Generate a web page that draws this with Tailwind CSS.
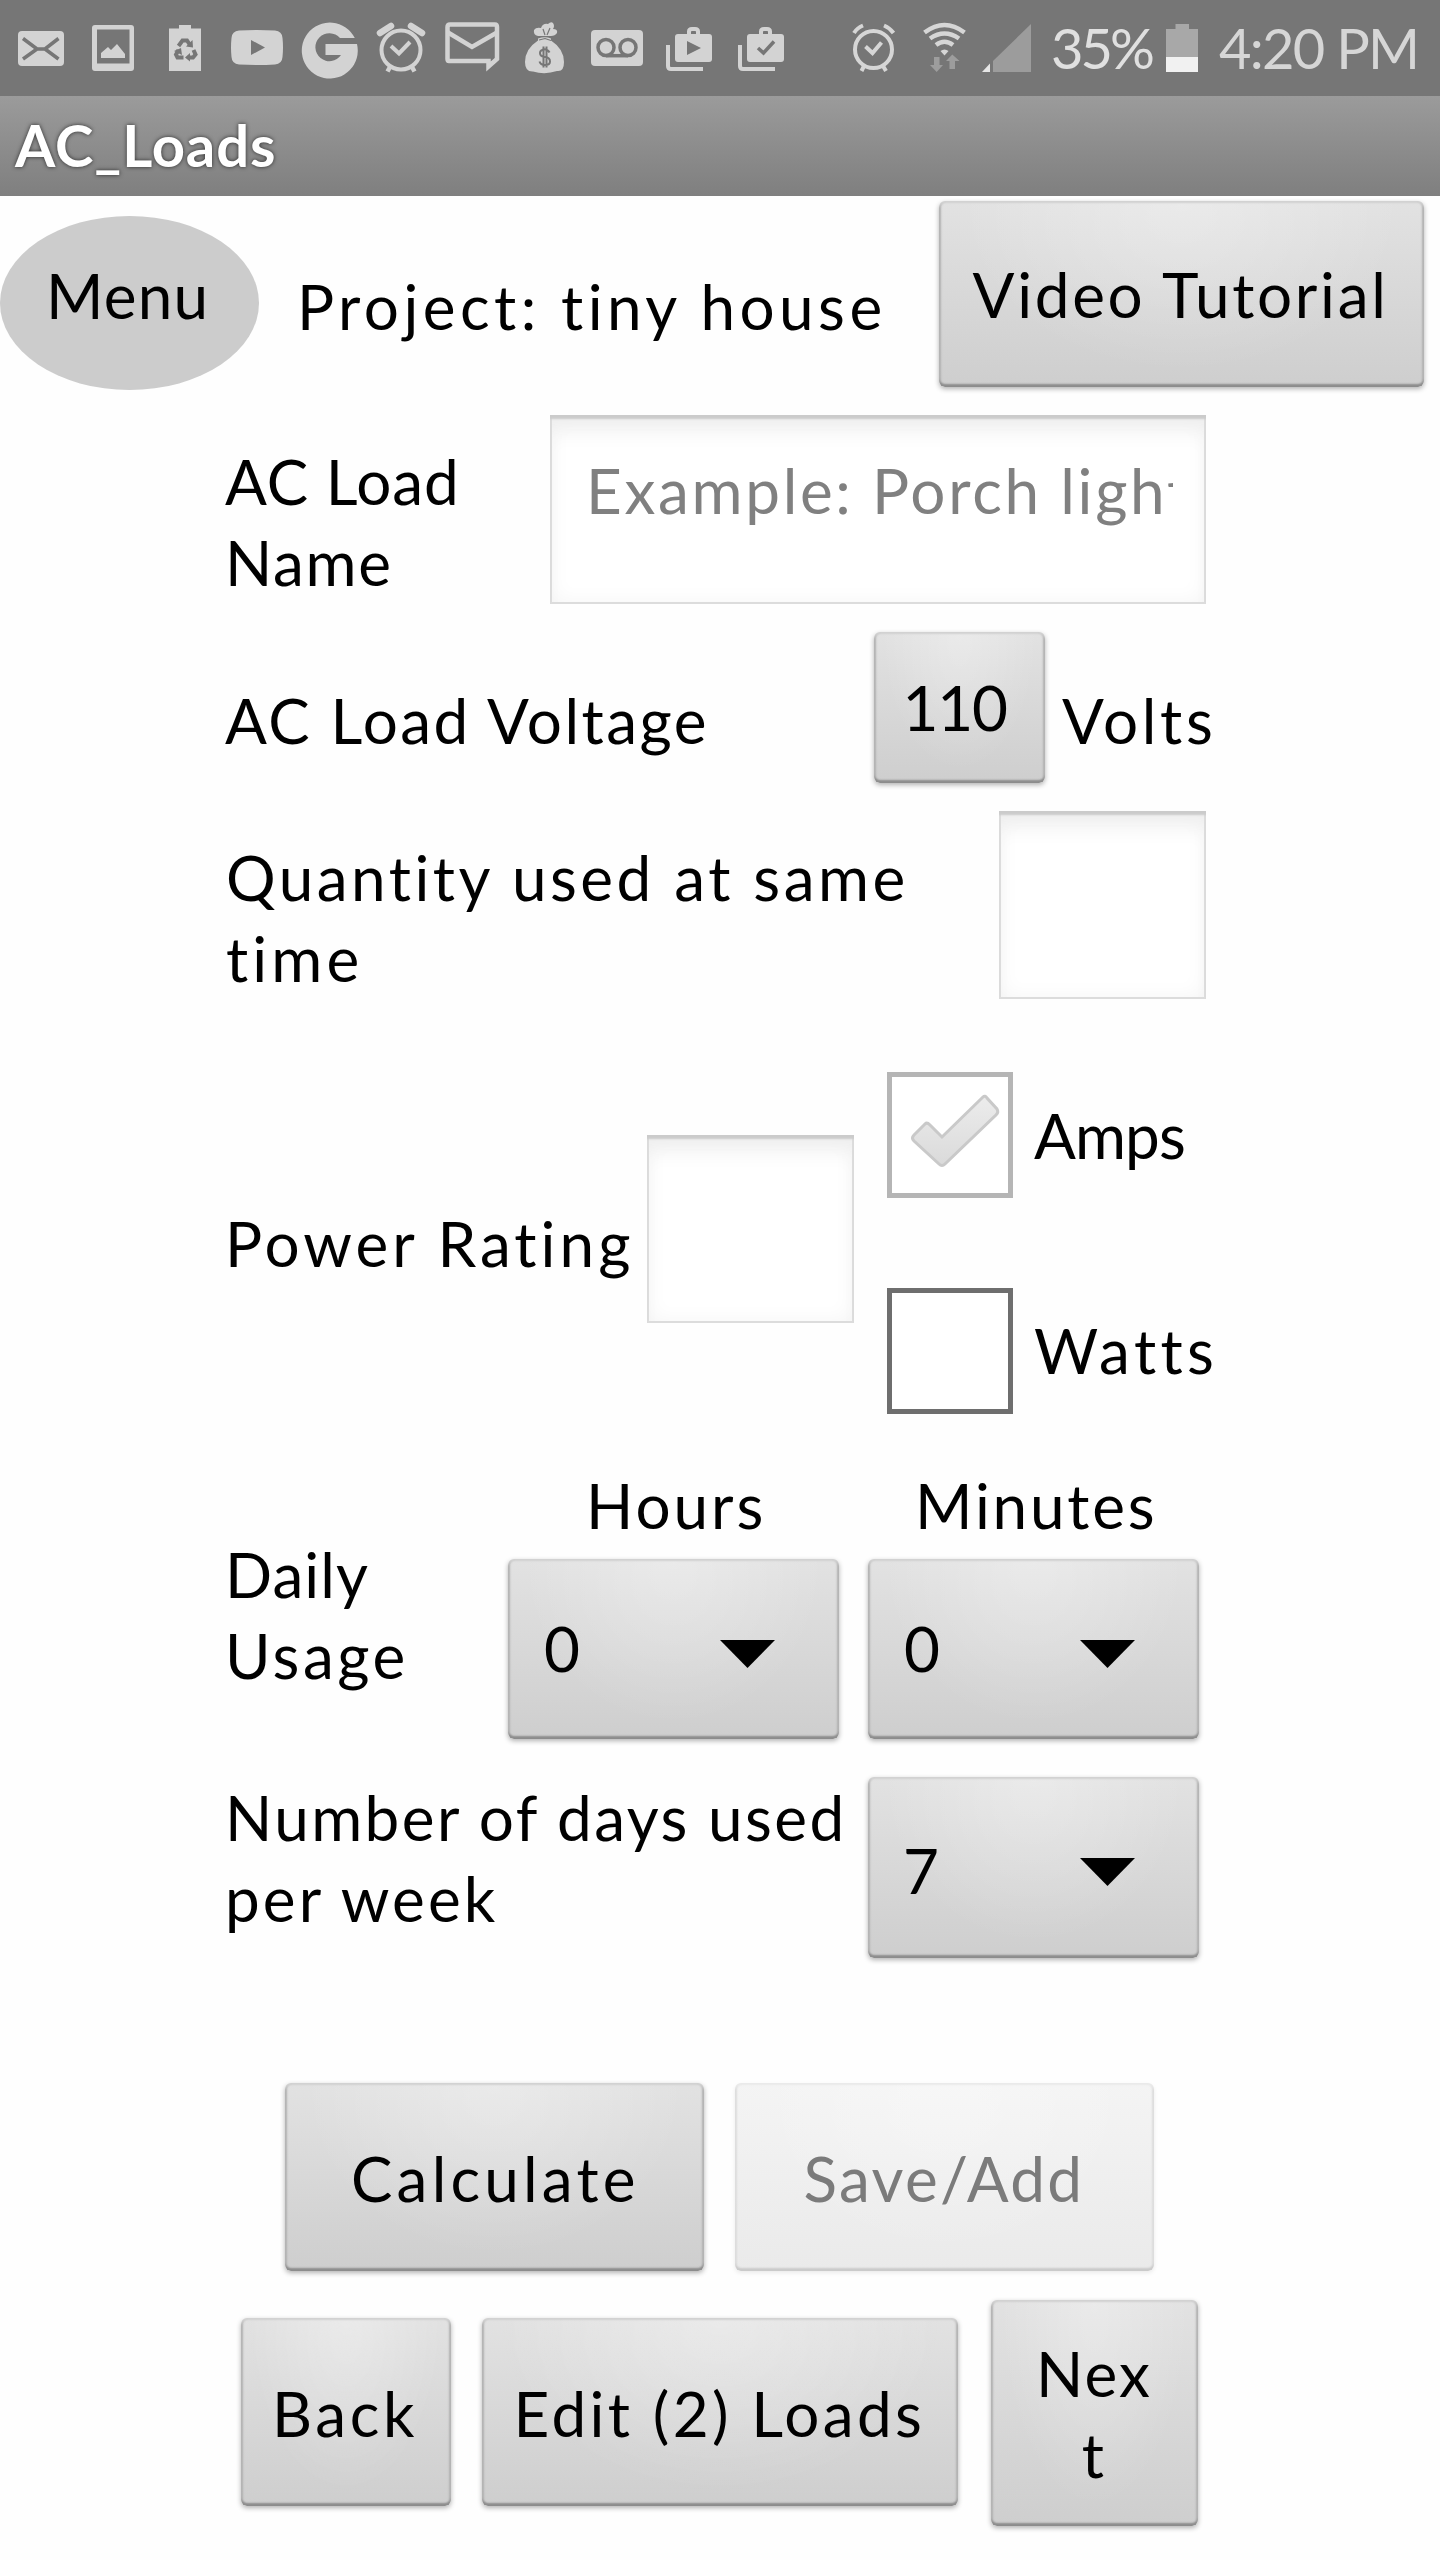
<!DOCTYPE html>
<html lang="en">
<head>
<meta charset="utf-8">
<title>AC_Loads</title>
<script src="https://cdn.jsdelivr.net/npm/@tailwindcss/browser@4"></script>
</head>
<body class="bg-white">
<div class="flex h-[2560px] w-[1440px] flex-col overflow-hidden bg-[#fefefe] font-[Lato,sans-serif] text-[62px] leading-[81px] whitespace-nowrap text-black">

  <!-- Status bar -->
  <header class="flex h-24 shrink-0 bg-[#767676] text-[56px] leading-[96px] text-[#d6d6d6]">
    <svg class="shrink-0" width="78" height="96" viewBox="0 0 78 96"><rect x="18" y="31" width="46" height="35" rx="4" fill="#d3d3d3"/><path d="M23 38.500L37 49H45L58.500 38.500M23 59L37 49M45 49L58.500 59" fill="none" stroke="#767676" stroke-width="3.500"/></svg>
    <svg class="shrink-0" width="74" height="96" viewBox="78 0 74 96"><path fill-rule="evenodd" fill="#d3d3d3" d="M95 25H131Q134 25 134 28V68Q134 71 131 71H95Q92 71 92 68V28Q92 25 95 25ZM97 29.500V63.500H129.500V29.500Z"/><path d="M101 58V53L108 47L111 50L117 44L125 54V58Z" fill="#d3d3d3"/></svg>
    <svg class="shrink-0" width="64" height="96" viewBox="152 0 64 96"><path d="M169 28.500H179V25H191V28.500H201V71H169Z" fill="#d3d3d3"/><g fill="none" stroke="#767676" stroke-width="4"><path d="M178.500 46L182.500 40.500H187L190 45"/><path d="M193.500 50L195.500 54.500L193 57.500H188"/><path d="M183.500 57.500H177.500L176 54.500L178.500 50"/></g><path d="M186 46.500L193 47.500L192.500 40ZM190 53V61.500L185 57.500ZM174 51L181 48L182 55Z" fill="#767676"/></svg>
    <svg class="shrink-0" width="76" height="96" viewBox="216 0 76 96"><path d="M239 30.500Q257 29.500 275 30.500Q282 31 282.500 38Q283.500 47.500 282.500 57Q282 64 275 64.500Q257 65.500 239 64.500Q232 64 231.500 57Q230.500 47.500 231.500 38Q232 31 239 30.500Z" fill="#d3d3d3"/><path d="M251 40V55L265 47.500Z" fill="#767676"/></svg>
    <svg class="shrink-0" width="76" height="96" viewBox="292 0 76 96"><path d="M354.800 38A28 28 0 1 0 357 44H325.500V55H341A14 14 0 1 1 340 38Z" fill="#d3d3d3"/></svg>
    <svg class="shrink-0" width="67" height="96" viewBox="368 0 67 96" fill="none" stroke="#d3d3d3"><circle cx="401" cy="50" r="19.500" stroke-width="4"/><path d="M391 46L399 53.500L410 42" stroke-width="4"/><path d="M380 33L391 26M411 26L422 33" stroke-width="6.500" stroke-linecap="round"/><path d="M390 67L387.500 71.500M412 67L414.500 71.500" stroke-width="4.500"/></svg>
    <svg class="shrink-0" width="77" height="96" viewBox="435 0 77 96" fill="none" stroke="#d3d3d3" stroke-width="4.500"><path d="M488.500 61H449Q447.500 61 447.500 59V27Q447.500 24.500 450 24.500H495Q497 24.500 497 27V59L488.500 66.500Z"/><path d="M448 32.500L472 47L497 32.500"/></svg>
    <svg class="shrink-0" width="66" height="96" viewBox="512 0 66 96"><path d="M538 36Q533 35 534 30Q536 27 541 28Q543 23 548 24Q551 21 553 23Q555 26 553 29Q558 29 557 33Q555 36 551 36Z" fill="#d3d3d3"/><path d="M538 38.500Q545 36 551 38.500V40.500Q564 49 564 62Q564 72 557 71Q545 75 533 71.500Q525 72 525 62Q525 49 538 40.500Z" fill="#d3d3d3"/><path d="M543 29L545 35M550 28L547 35M539 40L545 38.500L551 40.500" fill="none" stroke="#767676" stroke-width="1.200"/><path d="M549.500 52.500Q548 49.500 545 49.500Q540 49.500 540 53Q540 56.500 545 57Q550 57.500 550 61.500Q550 65 545 65Q540.500 65 539.500 61.500M543.500 46.500V67.500M546.500 46.500V67.500" fill="none" stroke="#767676" stroke-width="2"/></svg>
    <svg class="shrink-0" width="77" height="96" viewBox="578 0 77 96"><rect x="591" y="30" width="52" height="36" rx="4" fill="#d3d3d3"/><g fill="none" stroke="#767676" stroke-width="3.500"><circle cx="606" cy="47.500" r="8"/><circle cx="628" cy="47.500" r="8"/><path d="M606 55.700H628"/></g></svg>
    <svg class="shrink-0" width="73" height="96" viewBox="655 0 73 96"><rect x="675" y="34" width="37" height="28" rx="3" fill="#d3d3d3"/><path d="M689 34V31.500Q689 29 692 29H695Q698 29 698 31.500V34M668 45V66Q668 69 671 69H703" fill="none" stroke="#d3d3d3" stroke-width="4"/><path d="M687 41V55L701 48Z" fill="#767676"/></svg>
    <svg class="shrink-0" width="72" height="96" viewBox="728 0 72 96"><rect x="747" y="34" width="37" height="28" rx="3" fill="#d3d3d3"/><path d="M761 34V31.500Q761 29 764 29H767Q770 29 770 31.500V34M740 45V66Q740 69 743 69H775" fill="none" stroke="#d3d3d3" stroke-width="4"/><path d="M758 48L763.500 53L774 41.500" fill="none" stroke="#767676" stroke-width="3.500"/></svg>
    <svg class="ml-10 shrink-0" width="75" height="96" viewBox="840 0 75 96" fill="none" stroke="#d6d6d6"><circle cx="873.500" cy="49.500" r="18.500" stroke-width="4"/><path d="M865.500 46.500L872.500 53L881.500 42.500" stroke-width="4"/><path d="M854 33Q857 28 863 25.500M884 25.500Q890 28 893.500 33" stroke-width="4"/><path d="M864 66L861.500 71M883 66L886 71" stroke-width="4"/></svg>
    <svg class="shrink-0" width="60" height="96" viewBox="915 0 60 96"><g fill="none" stroke="#d6d6d6" stroke-width="4.500"><path d="M924.500 32.500Q944.500 17.500 964.500 32.500"/><path d="M930 38.500Q944.500 28.500 959 38.500"/><path d="M936 45Q944.500 38.500 953 45"/></g><path d="M940.500 51Q944.500 48 948.500 51L944.500 55.500Z" fill="#d6d6d6"/><path d="M934 57H939.500V65H943L936.700 72L930 65H934ZM949.500 69H955V61H959.500L952.300 54.500L946 61H949.500Z" fill="#9d9d9d"/></svg>
    <svg class="shrink-0" width="70" height="96" viewBox="975 0 70 96"><path d="M993 61L1031 24V72H993Z" fill="#9c9c9c"/><path d="M982 72L990 63.500V72Z" fill="#e6e6e6"/></svg>
    <div class="w-[115px] shrink-0 pl-[6px] tracking-[-2.98px] text-[#e0e0e0]">35%</div>
    <svg class="shrink-0" width="45" height="96" viewBox="1160 0 45 96"><path d="M1166 29H1175.500V24H1189V29H1198V57H1166Z" fill="#a8a8a8"/><path d="M1166 57H1198V72H1166Z" fill="#f1f1f1"/></svg>
    <div class="pl-[14px] tracking-[-1.73px]">4:20 PM</div>
  </header>

  <!-- Title bar -->
  <div class="h-[100px] shrink-0 bg-linear-to-b from-[#9b9b9b] to-[#7f7f7f] pl-[15px] text-[58px] leading-[98px] font-bold tracking-[0.89px] text-white [text-shadow:0_0_4px_rgba(0,0,0,0.7)]">AC_Loads</div>

  <main class="flex flex-col">
    <!-- Project header -->
    <div class="flex h-[209px] items-start">
      <div class="mt-5 h-[174px] w-[259px] shrink-0 rounded-[50%] bg-[#ccc] pt-[39px] pl-[46px] tracking-[1.2px]">Menu</div>
      <div class="mt-[69.5px] ml-[38px] w-[590px] shrink-0 tracking-[4.45px]">Project: tiny house</div>
      <button class="mt-[5px] ml-[52px] h-[186px] w-[485px] shrink-0 rounded-md bg-[radial-gradient(ellipse_at_50%_0%,rgba(255,255,255,0.3),transparent_65%),linear-gradient(#e2e2e2,#cecece)] pb-[0px] pl-[33.5px] text-left tracking-[2.69px] shadow-[inset_0_2px_2px_#d2d2d2,inset_0_-3px_2px_#8c8c8c,inset_2px_0_2px_#b4b4b4,inset_-2px_0_2px_#b4b4b4,0_2px_5px_rgba(0,0,0,0.3)]">Video Tutorial</button>
    </div>

    <!-- Load name -->
    <div class="flex h-[217px] items-start">
      <div class="mt-[35.5px] w-[549.5px] shrink-0 pl-[225px]"><div class="tracking-[0.89px]">AC Load</div><div class="tracking-[1.7px]">Name</div></div>
      <div class="mt-[9.5px] h-[189px] w-[656px] shrink-0 bg-white pt-[35px] pl-[36.5px] shadow-[inset_0_5px_2px_-1px_#cbcbcb,inset_0_0_0_2px_#dcdcdc,inset_0_24px_22px_-10px_#ededed,inset_0_0_22px_#f3f3f3]"><div class="w-[587px] overflow-hidden tracking-[2.68px] text-[#808080]">Example: Porch light</div></div>
    </div>

    <!-- Voltage -->
    <div class="flex h-[183px] items-start">
      <div class="mt-[57.5px] w-[874px] shrink-0 pl-[225px] tracking-[2.49px]">AC Load Voltage</div>
      <button class="mt-[10px] h-[151px] w-[171px] shrink-0 rounded-md bg-[radial-gradient(ellipse_at_50%_0%,rgba(255,255,255,0.3),transparent_65%),linear-gradient(#e2e2e2,#cecece)] pb-[1px] pl-[28.5px] text-left tracking-[-1.21px] shadow-[inset_0_2px_2px_#d2d2d2,inset_0_-3px_2px_#8c8c8c,inset_2px_0_2px_#b4b4b4,inset_-2px_0_2px_#b4b4b4,0_2px_5px_rgba(0,0,0,0.3)]">110</button>
      <div class="mt-[57.5px] ml-[17px] tracking-[3.67px]">Volts</div>
    </div>

    <!-- Quantity -->
    <div class="flex h-[255px] items-start">
      <div class="mt-[31.5px] w-[999px] shrink-0 pl-[226px]"><div class="tracking-[3.51px]">Quantity used at same</div><div class="tracking-[4.1px]">time</div></div>
      <div class="mt-[6px] h-[188px] w-[207px] shrink-0 bg-white shadow-[inset_0_5px_2px_-1px_#cbcbcb,inset_0_0_0_2px_#dcdcdc,inset_0_24px_22px_-10px_#ededed,inset_0_0_22px_#f3f3f3]"></div>
    </div>

    <!-- Power rating -->
    <div class="flex h-[400px] items-start">
      <div class="mt-[142.5px] w-[647px] shrink-0 pl-[225px] tracking-[4.02px]">Power Rating</div>
      <div class="mt-[75px] h-[188px] w-[207px] shrink-0 bg-white shadow-[inset_0_5px_2px_-1px_#cbcbcb,inset_0_0_0_2px_#dcdcdc,inset_0_24px_22px_-10px_#ededed,inset_0_0_22px_#f3f3f3]"></div>
      <div class="mt-[12px] ml-[33px] flex flex-col gap-[90px]">
        <div class="flex h-[126px] gap-[21px]">
          <div class="w-[126px] shrink-0 border-[5px] border-[#b5b5b5] bg-white"><svg width="114" height="114" viewBox="4 4 114 114"><defs><linearGradient id="tick" x1="0" y1="0" x2="0" y2="1"><stop offset="0" stop-color="#ececec"/><stop offset="1" stop-color="#dadada"/></linearGradient></defs><path d="M95 24Q97 22 99 25L109 36Q111 39 108 42L57 91Q54 94 51 91L26 68Q23 65 26 62L37 51Q39 49 42 52L54 64Z" fill="url(#tick)" stroke="#c9c9c9" stroke-width="3"/></svg></div>
          <div class="pt-[22.5px] tracking-[-0.87px]">Amps</div>
        </div>
        <div class="flex h-[126px] gap-[21px]">
          <div class="w-[126px] shrink-0 border-[5px] border-[#6e6e6e] bg-white"></div>
          <div class="pt-[22px] tracking-[4.39px]">Watts</div>
        </div>
      </div>
    </div>

    <!-- Daily usage -->
    <div class="flex h-[305px] items-start">
      <div class="mt-[74px] w-[508px] shrink-0 pl-[225px]"><div class="tracking-[1.08px]">Daily</div><div class="tracking-[3.5px]">Usage</div></div>
      <div class="mt-[4.5px] w-[331px] shrink-0">
        <div class="pl-[78px] tracking-[3px]">Hours</div>
        <div class="mt-[13px] flex h-[180px] items-start rounded-md bg-[radial-gradient(ellipse_at_50%_0%,rgba(255,255,255,0.3),transparent_65%),linear-gradient(#e2e2e2,#cecece)] shadow-[inset_0_2px_2px_#d2d2d2,inset_0_-3px_2px_#8c8c8c,inset_2px_0_2px_#b4b4b4,inset_-2px_0_2px_#b4b4b4,0_2px_5px_rgba(0,0,0,0.3)]"><div class="w-[212px] pt-[49px] pl-[36px]">0</div><svg class="mt-[81px]" width="55" height="28" viewBox="0 0 55 28"><path d="M0 0H55L27.500 28Z"/></svg></div>
      </div>
      <div class="mt-[4.5px] ml-[29px] w-[331px] shrink-0">
        <div class="pl-[47px] tracking-[2.8px]">Minutes</div>
        <div class="mt-[13px] flex h-[180px] items-start rounded-md bg-[radial-gradient(ellipse_at_50%_0%,rgba(255,255,255,0.3),transparent_65%),linear-gradient(#e2e2e2,#cecece)] shadow-[inset_0_2px_2px_#d2d2d2,inset_0_-3px_2px_#8c8c8c,inset_2px_0_2px_#b4b4b4,inset_-2px_0_2px_#b4b4b4,0_2px_5px_rgba(0,0,0,0.3)]"><div class="w-[212px] pt-[49px] pl-[36px]">0</div><svg class="mt-[81px]" width="55" height="28" viewBox="0 0 55 28"><path d="M0 0H55L27.500 28Z"/></svg></div>
      </div>
    </div>

    <!-- Days per week -->
    <div class="flex h-[305px] items-start">
      <div class="mt-[11.5px] w-[868px] shrink-0 pl-[225px]"><div class="tracking-[2.42px]">Number of days used</div><div class="tracking-[3.1px]">per week</div></div>
      <div class="mt-[12px] flex h-[181px] w-[331px] shrink-0 items-start rounded-md bg-[radial-gradient(ellipse_at_50%_0%,rgba(255,255,255,0.3),transparent_65%),linear-gradient(#e2e2e2,#cecece)] shadow-[inset_0_2px_2px_#d2d2d2,inset_0_-3px_2px_#8c8c8c,inset_2px_0_2px_#b4b4b4,inset_-2px_0_2px_#b4b4b4,0_2px_5px_rgba(0,0,0,0.3)]"><div class="w-[212px] pt-[53px] pl-[35px]">7</div><svg class="mt-[81px]" width="55" height="28" viewBox="0 0 55 28"><path d="M0 0H55L27.500 28Z"/></svg></div>
    </div>

    <!-- Actions -->
    <div class="flex h-[220px] items-start pl-[285px]">
      <button class="mt-[13px] h-[188px] w-[418.5px] shrink-0 rounded-md bg-[radial-gradient(ellipse_at_50%_0%,rgba(255,255,255,0.3),transparent_65%),linear-gradient(#e2e2e2,#cecece)] pt-[2px] pl-[66px] text-left tracking-[4.2px] shadow-[inset_0_2px_2px_#d2d2d2,inset_0_-3px_2px_#8c8c8c,inset_2px_0_2px_#b4b4b4,inset_-2px_0_2px_#b4b4b4,0_2px_5px_rgba(0,0,0,0.3)]">Calculate</button>
      <button class="mt-[13px] ml-[31.5px] h-[188px] w-[418.5px] shrink-0 rounded-md bg-[radial-gradient(ellipse_at_50%_0%,rgba(255,255,255,0.3),transparent_65%),linear-gradient(#f4f4f4,#eaeaea)] pt-[2px] pl-[68.5px] text-left tracking-[2.3px] text-[#7b7b7b] shadow-[inset_0_2px_2px_#eaeaea,inset_0_-3px_2px_#cacaca,inset_2px_0_2px_#dedede,inset_-2px_0_2px_#dedede,0_2px_4px_rgba(0,0,0,0.08)]">Save/Add</button>
    </div>
    <div class="flex h-[270px] items-start pl-[240.5px]">
      <button class="mt-[28px] h-[188px] w-[210.5px] shrink-0 rounded-md bg-[radial-gradient(ellipse_at_50%_0%,rgba(255,255,255,0.3),transparent_65%),linear-gradient(#e2e2e2,#cecece)] pt-[3px] pl-[31.5px] text-left tracking-[3.66px] shadow-[inset_0_2px_2px_#d2d2d2,inset_0_-3px_2px_#8c8c8c,inset_2px_0_2px_#b4b4b4,inset_-2px_0_2px_#b4b4b4,0_2px_5px_rgba(0,0,0,0.3)]">Back</button>
      <button class="mt-[28px] ml-[30.5px] h-[188px] w-[476.5px] shrink-0 rounded-md bg-[radial-gradient(ellipse_at_50%_0%,rgba(255,255,255,0.3),transparent_65%),linear-gradient(#e2e2e2,#cecece)] pt-[3px] pl-[32px] text-left tracking-[3.4px] shadow-[inset_0_2px_2px_#d2d2d2,inset_0_-3px_2px_#8c8c8c,inset_2px_0_2px_#b4b4b4,inset_-2px_0_2px_#b4b4b4,0_2px_5px_rgba(0,0,0,0.3)]">Edit (2) Loads</button>
      <button class="mt-[10px] ml-[33px] h-[226px] w-[207px] shrink-0 rounded-md bg-[radial-gradient(ellipse_at_50%_0%,rgba(255,255,255,0.3),transparent_65%),linear-gradient(#e2e2e2,#cecece)] pt-[1px] pr-[1px] text-center tracking-[2.2px] shadow-[inset_0_2px_2px_#d2d2d2,inset_0_-3px_2px_#8c8c8c,inset_2px_0_2px_#b4b4b4,inset_-2px_0_2px_#b4b4b4,0_2px_5px_rgba(0,0,0,0.3)]">Nex<br>t</button>
    </div>
  </main>
</div>
</body>
</html>
